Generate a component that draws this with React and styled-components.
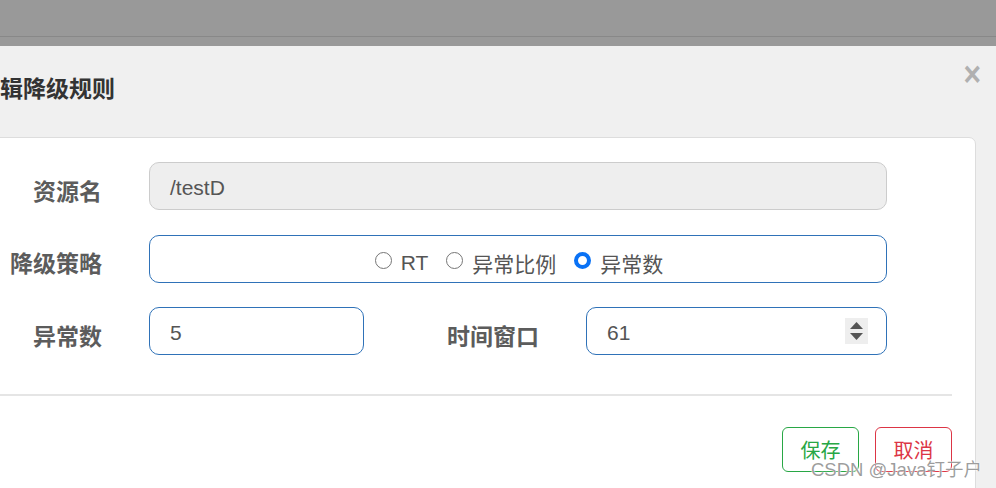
import React from 'react';
import styled, { createGlobalStyle } from 'styled-components';

const Global = createGlobalStyle`
  html, body {
    margin: 0;
    padding: 0;
    background: #f0f0f0;
    overflow: hidden;
  }
  body {
    font-family: "Liberation Sans", "Noto Sans CJK SC", sans-serif;
  }
`;

const Page = styled.div`
  position: relative;
  width: 996px;
  height: 488px;
  overflow: hidden;
  background: #f0f0f0;
`;

const Backdrop = styled.div`
  height: 36px;
  background: #999;
  border-bottom: 1px solid #888;
  & + div {
    border-top: 9px solid #999;
  }
`;

const Dialog = styled.div`
  background: #f0f0f0;
`;

const Header = styled.div`
  height: 91px;
  display: flex;
  justify-content: space-between;
  align-items: flex-start;
`;

const Title = styled.h4`
  margin: 26px 0 0 -23px;
  font-size: 23px;
  font-weight: 700;
  color: #333;
  font-family: "Noto Sans CJK SC", sans-serif;
  line-height: 30px;
`;

const Close = styled.span`
  margin: 8px 15px 0 0;
  font-size: 30px;
  font-weight: 700;
  color: #b0b0b0;
  line-height: 40px;
  font-family: "Liberation Sans", sans-serif;
  transform: scaleY(1.15);
`;

const Panel = styled.div`
  margin: 0 20px 0 -20px;
  background: #fff;
  border: 1px solid #ddd;
  border-radius: 7px;
  height: 400px;
  padding-top: 24px;
  box-sizing: border-box;
`;

const Row = styled.div`
  display: flex;
  align-items: center;
  height: 48px;
  padding-right: 88px;
  margin-bottom: 24.5px;
`;

const Label = styled.label`
  flex: none;
  width: ${p => p.$w || 121}px;
  margin-right: 47px;
  text-align: right;
  font-family: "Noto Sans CJK SC", sans-serif;
  font-weight: 700;
  font-size: 23px;
  color: #5c5c5c;
  padding-top: 7px;
`;

const Field = styled.div`
  box-sizing: border-box;
  height: 48px;
  ${p => (p.$w ? `width: ${p.$w}px; flex: none;` : 'flex: 1;')}
  border: 1px solid ${p => (p.$disabled ? '#ccc' : '#2f72b8')};
  background: ${p => (p.$disabled ? '#eee' : '#fff')};
  border-radius: 10px;
  display: flex;
  align-items: center;
  justify-content: ${p => (p.$center ? 'center' : 'space-between')};
  padding: 3px 18px 0 20px;
  font-size: 21px;
  color: #555;
`;

const Radio = styled.span`
  display: inline-flex;
  align-items: center;
  margin-left: ${p => (p.$first ? 0 : 18)}px;
  font-family: "Liberation Sans", "Noto Sans CJK SC", sans-serif;
  font-size: 21px;
  color: #555;
  padding-top: 6px;
`;

const Dot = styled.span`
  box-sizing: border-box;
  width: 17px;
  height: 17px;
  border-radius: 50%;
  margin-right: 9px;
  margin-top: -6px;
  border: ${p => (p.$on ? '4px solid #0a72f5' : '1.5px solid #767676')};
  background: #fff;
`;

const Spinner = styled.svg`
  width: 23px;
  height: 26px;
  background: #eee;
  display: block;
  margin-top: -3px;
`;

const Divider = styled.div`
  height: 2px;
  background: #e5e5e5;
  margin: 39px 23px 0 0;
`;

const Footer = styled.div`
  display: flex;
  justify-content: flex-end;
  gap: 16px;
  margin: 31px 23px 0 0;
`;

const Button = styled.button`
  box-sizing: border-box;
  width: 77px;
  height: 45px;
  background: #fff;
  border: 1px solid ${p => p.$color};
  color: ${p => p.$color};
  border-radius: 6px;
  font-size: 20px;
  font-family: "Noto Sans CJK SC", sans-serif;
  padding: 0;
`;

const Watermark = styled.div`
  position: absolute;
  left: 811px;
  top: 455px;
  font-size: 18.5px;
  color: rgba(140, 140, 140, 0.85);
  font-family: "Liberation Sans", "Noto Sans CJK SC", sans-serif;
  text-shadow: 0 0 2px #fff, 0 0 1px #fff;
  white-space: nowrap;
`;

export default function App() {
  return (
    <Page>
      <Global />
      <Backdrop />
      <Dialog>
        <Header>
          <Title>编辑降级规则</Title>
          <Close>×</Close>
        </Header>
        <Panel>
          <Row>
            <Label>资源名</Label>
            <Field $disabled>/testD</Field>
          </Row>
          <Row>
            <Label>降级策略</Label>
            <Field $center>
              <Radio $first><Dot />RT</Radio>
              <Radio><Dot />异常比例</Radio>
              <Radio><Dot $on />异常数</Radio>
            </Field>
          </Row>
          <Row>
            <Label>异常数</Label>
            <Field $w={215}>5</Field>
            <Label $w={175}>时间窗口</Label>
            <Field>
              61
              <Spinner viewBox="0 0 23 26">
                <path d="M5 11 L11.5 4 L18 11 Z" fill="#555" />
                <path d="M5 15 L11.5 22 L18 15 Z" fill="#555" />
              </Spinner>
            </Field>
          </Row>
          <Divider />
          <Footer>
            <Button $color="#28a745">保存</Button>
            <Button $color="#dc3545">取消</Button>
          </Footer>
        </Panel>
      </Dialog>
      <Watermark>CSDN @Java钉子户</Watermark>
    </Page>
  );
}
